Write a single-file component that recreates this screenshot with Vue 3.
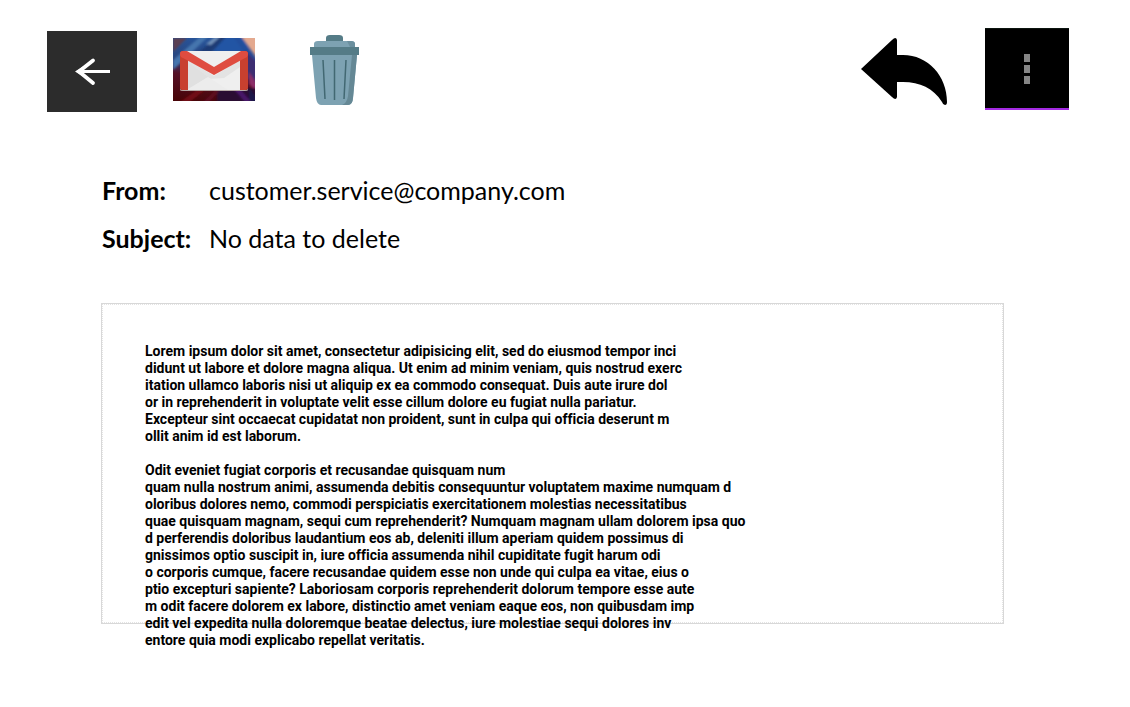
<script setup>
const fields = [
  { label: 'From:', value: 'customer.service@company.com' },
  { label: 'Subject:', value: 'No data to delete' },
]

const paragraphs = [
  [
    'Lorem ipsum dolor sit amet, consectetur adipisicing elit, sed do eiusmod tempor inci',
    'didunt ut labore et dolore magna aliqua. Ut enim ad minim veniam, quis nostrud exerc',
    'itation ullamco laboris nisi ut aliquip ex ea commodo consequat. Duis aute irure dol',
    'or in reprehenderit in voluptate velit esse cillum dolore eu fugiat nulla pariatur.',
    'Excepteur sint occaecat cupidatat non proident, sunt in culpa qui officia deserunt m',
    'ollit anim id est laborum.',
  ],
  [
    'Odit eveniet fugiat corporis et recusandae quisquam num',
    'quam nulla nostrum animi, assumenda debitis consequuntur voluptatem maxime numquam d',
    'oloribus dolores nemo, commodi perspiciatis exercitationem molestias necessitatibus',
    'quae quisquam magnam, sequi cum reprehenderit? Numquam magnam ullam dolorem ipsa quo',
    'd perferendis doloribus laudantium eos ab, deleniti illum aperiam quidem possimus di',
    'gnissimos optio suscipit in, iure officia assumenda nihil cupiditate fugit harum odi',
    'o corporis cumque, facere recusandae quidem esse non unde qui culpa ea vitae, eius o',
    'ptio excepturi sapiente? Laboriosam corporis reprehenderit dolorum tempore esse aute',
    'm odit facere dolorem ex labore, distinctio amet veniam eaque eos, non quibusdam imp',
    'edit vel expedita nulla doloremque beatae delectus, iure molestiae sequi dolores inv',
    'entore quia modi explicabo repellat veritatis.',
  ],
]
</script>

<template>
  <main class="mail">
    <header class="toolbar">
      <button class="tool back" type="button" aria-label="Back">
        <svg width="90" height="81" viewBox="0 0 90 81">
          <path d="M63 40.500H31" fill="none" stroke="#fff" stroke-width="3" />
          <path d="M46 29.500 32 40.500l14 11.500" fill="none" stroke="#fff" stroke-width="3.800" stroke-linecap="round" />
          <path d="m28 40.500 8-5v10z" fill="#fff" />
        </svg>
      </button>
      <button class="tool gmail" type="button" aria-label="Gmail">
        <svg width="82" height="63" viewBox="0 0 82 63">
          <defs>
            <linearGradient id="backdrop" x1=".4" y1="0" x2=".25" y2="1">
              <stop offset="0" stop-color="#27549a" />
              <stop offset=".35" stop-color="#29467f" />
              <stop offset=".6" stop-color="#551026" />
              <stop offset="1" stop-color="#480509" />
            </linearGradient>
            <filter id="soft"><feGaussianBlur stdDeviation="1.200" /></filter>
            <clipPath id="frame"><path d="M0 0h82v63H0z" /></clipPath>
          </defs>
          <path d="M0 0h82v63H0z" fill="url(#backdrop)" />
          <g clip-path="url(#frame)">
            <g filter="url(#soft)">
              <path d="M0 0h14L0 14z" fill="#5a4052" />
              <path d="m0 22 28-24h8L0 32z" fill="#4575ad" />
              <path d="M26 14 46-2h8L38 14z" fill="#1c3a74" />
              <path d="m40 14 14-16h14l10 16z" fill="#2454a4" />
              <path d="m33 6 9-7h5l-9 8z" fill="#6f8fb8" />
              <path d="m68-2 16 22V-2z" fill="#e4a98f" />
              <path d="m64-2 20 24v12L60-2z" fill="#24509c" />
              <path d="m72 12 12 12v24l-10-8z" fill="#3c2f72" />
              <path d="m76 34 8 12v8l-8-8z" fill="#8c2e68" />
              <path d="M44 66V50h40v16z" fill="#2a0a33" />
              <path d="m66 50 14 16h-6L60 50z" fill="#4a176a" />
              <path d="m76 50 8 10v8l-8-6z" fill="#1c1748" />
              <path d="m4 66 20-14h8L14 66z" fill="#720c13" />
              <path d="m28 66 14-13h4L34 66z" fill="#601023" />
            </g>
          </g>
          <rect x="7" y="13" width="68" height="39" rx="3" fill="#c9402f" />
          <path d="M14 13h54v39H14z" fill="#efefef" />
          <path d="m15 22 26 16 26-16v7L51 40 35 41 15 29z" fill="#e3e3e3" />
          <path d="m15 24 20 15-20 13z" fill="#e0e0e0" />
          <path d="m15 51 20-12 20 13H15z" fill="#ececec" />
          <path d="M7 50q0 2 3 2h62q3 0 3-2v2q0 1-3 1H10q-3 0-3-1z" fill="#b5a9a6" />
          <path d="M7 17v32q0 3 3 3h5V22zM75 17v32q0 3-3 3h-5V22z" fill="#c8402f" />
          <path d="M10 13h4l27 16 27-16h4q3 0 3 3 0 3-3 4L41 37 10 20q-3-1-3-4 0-3 3-3z" fill="#df4c40" />
        </svg>
      </button>
      <button class="tool trash" type="button" aria-label="Delete">
        <svg width="50" height="70" viewBox="0 0 50 70">
          <path d="M16 7V3q0-3 4-3h9q4 0 4 3v4z" fill="#557c87" />
          <path d="M4 12V9q0-3 4-3h33q4 0 4 3v3z" fill="#7da2b2" />
          <path d="M37 6h4q4 0 4 3v3h-5z" fill="#6b8f9e" />
          <path d="M2 20h45l-4 43q-.500 7-5 7H11q-4 0-5-7z" fill="#7da2b2" />
          <path d="M42 20h5l-4 43q-.500 7-5 7h-6q5-2 6-9z" fill="#658895" />
          <path d="M0 12h49v8H0z" fill="#557c87" />
          <path d="m13 25 2 39M24.500 25v40M36 25l-2 39" fill="none" stroke="#426872" stroke-width="1.500" />
        </svg>
      </button>
      <button class="tool reply" type="button" aria-label="Reply">
        <svg width="87" height="68" viewBox="0 0 87 68">
          <path d="M0 31 31 2q4-4 5 0v15h6c25 0 44 21 44 47q0 3-2 3-2 0-3-3C72 50 59 44 42 44h-6v15q-1 4-5 0z" />
        </svg>
      </button>
      <button class="tool more" type="button" aria-label="More options">
        <svg width="84" height="82" viewBox="0 0 84 82">
          <path d="M0 0h84v82H0z" />
          <path d="M0 0h84v1H0z" fill="#0c1510" />
          <path d="M39 26h6v8h-6zM39 37h6v8h-6zM39 48h6v8h-6z" fill="#858585" />
          <path d="M0 80h84v2H0z" fill="#a42be2" />
        </svg>
      </button>
    </header>

    <dl class="fields">
      <template v-for="field in fields" :key="field.label">
        <dt>{{ field.label }}</dt>
        <dd>{{ field.value }}</dd>
      </template>
    </dl>

    <article class="message">
      <div class="body">
        <p v-for="(lines, i) in paragraphs" :key="i">
          <span v-for="line in lines" :key="line" class="line">{{ line }}</span>
        </p>
      </div>
    </article>
  </main>
</template>

<style>
body {
  margin: 0;
  background: #fff;
}
</style>

<style scoped>
.mail {
  padding: 28px 61px 56px 47px;
  color: #000;
}

.toolbar {
  display: flex;
  align-items: center;
  height: 84px;
}

.tool {
  display: block;
  flex: none;
  padding: 0;
  border: 0;
  background: none;
  cursor: pointer;
}

.tool svg {
  display: block;
}

.back {
  align-self: flex-end;
  background: #2c2c2c;
}

.gmail {
  margin: 0 0 2px 36px;
}

.trash {
  margin-left: 55px;
}

.reply {
  margin: 4px 0 0 auto;
}

.more {
  align-self: flex-start;
  margin-left: 37px;
}

.fields {
  display: grid;
  grid-template-columns: 107px 1fr;
  margin: 54px 0 0 55px;
  font: 25px/48px Lato, "Open Sans", sans-serif;
}

.fields dt {
  font-weight: 700;
}

.fields dd {
  margin: 0;
}

.message {
  margin: 41px 65px 0 54px;
  padding: 39px 43px 0;
  border: 1px solid #d8d8d8;
  outline: 1px dotted #e4e4e4;
  outline-offset: -2px;
}

/* The last lines of the message run past the frame and over its border. */
.body {
  position: relative;
  margin-bottom: -26px;
  font: 700 14px/17px Roboto, sans-serif;
  font-variant-ligatures: none;
}

.body p {
  margin: 0 0 17px;
}

.body p:last-child {
  margin-bottom: 0;
}

.line {
  display: block;
  white-space: nowrap;
}
</style>
